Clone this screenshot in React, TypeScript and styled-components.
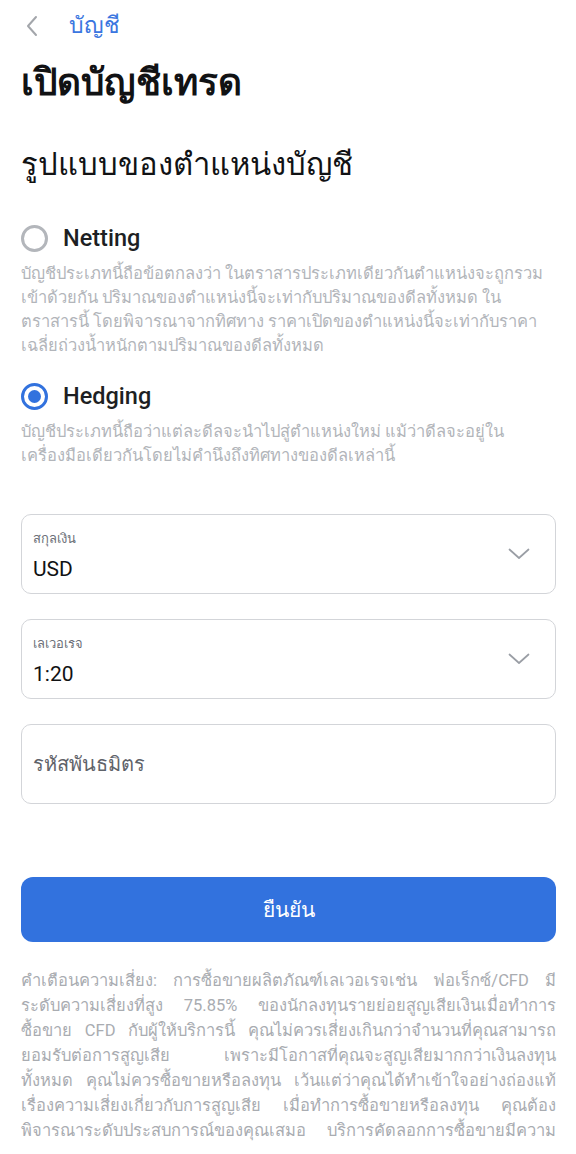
import React, { useState } from "react";
import styled, { createGlobalStyle } from "styled-components";

const GlobalStyle = createGlobalStyle`
  html, body {
    margin: 0;
    padding: 0;
    background: #ffffff;
  }
  body {
    font-family: Roboto, "Noto Sans", "Liberation Sans", sans-serif;
    color: #1d1f23;
  }
`;

// lines are split the way the app wraps them
const modes = [
  {
    key: "netting",
    label: "Netting",
    desc: [
      "บัญชีประเภทนี้ถือข้อตกลงว่า ในตราสารประเภทเดียวกันตำแหน่งจะถูกรวม",
      "เข้าด้วยกัน ปริมาณของตำแหน่งนี้จะเท่ากับปริมาณของดีลทั้งหมด ใน",
      "ตราสารนี้ โดยพิจารณาจากทิศทาง ราคาเปิดของตำแหน่งนี้จะเท่ากับราคา",
      "เฉลี่ยถ่วงน้ำหนักตามปริมาณของดีลทั้งหมด",
    ],
  },
  {
    key: "hedging",
    label: "Hedging",
    desc: [
      "บัญชีประเภทนี้ถือว่าแต่ละดีลจะนำไปสู่ตำแหน่งใหม่ แม้ว่าดีลจะอยู่ใน",
      "เครื่องมือเดียวกันโดยไม่คำนึงถึงทิศทางของดีลเหล่านี้",
    ],
  },
];

const warning = [
  "คำเตือนความเสี่ยง: การซื้อขายผลิตภัณฑ์เลเวอเรจเช่น ฟอเร็กซ์/CFD มี",
  "ระดับความเสี่ยงที่สูง 75.85% ของนักลงทุนรายย่อยสูญเสียเงินเมื่อทำการ",
  "ซื้อขาย CFD กับผู้ให้บริการนี้ คุณไม่ควรเสี่ยงเกินกว่าจำนวนที่คุณสามารถ",
  "ยอมรับต่อการสูญเสีย เพราะมีโอกาสที่คุณจะสูญเสียมากกว่าเงินลงทุน",
  "ทั้งหมด คุณไม่ควรซื้อขายหรือลงทุน เว้นแต่ว่าคุณได้ทำเข้าใจอย่างถ่องแท้",
  "เรื่องความเสี่ยงเกี่ยวกับการสูญเสีย เมื่อทำการซื้อขายหรือลงทุน คุณต้อง",
  "พิจารณาระดับประสบการณ์ของคุณเสมอ บริการคัดลอกการซื้อขายมีความ",
];

const Chevron = ({ dir }: { dir: "left" | "down" }) =>
  dir === "left" ? (
    <svg width="14" height="22" viewBox="0 0 14 22" fill="none">
      <path d="M11 2 L3 11 L11 20" stroke="#a3a6ab" strokeWidth="2" strokeLinecap="round" strokeLinejoin="round" />
    </svg>
  ) : (
    <svg width="24" height="14" viewBox="0 0 24 14" fill="none">
      <path d="M2.5 2.5 L12 11 L21.5 2.5" stroke="#9a9ea5" strokeWidth="1.7" strokeLinecap="round" strokeLinejoin="round" />
    </svg>
  );

const App = () => {
  const [mode, setMode] = useState("hedging");

  return (
    <Page>
      <GlobalStyle />
      <TopBar>
        <BackBtn>
          <Chevron dir="left" />
        </BackBtn>
        <TopTitle>บัญชี</TopTitle>
      </TopBar>

      <PageTitle>เปิดบัญชีเทรด</PageTitle>
      <SectionTitle>รูปแบบของตำแหน่งบัญชี</SectionTitle>

      <ModeList>
        {modes.map((m) => (
          <ModeItem key={m.key} onClick={() => setMode(m.key)}>
            <ModeHead>
              <Radio checked={mode === m.key} />
              <ModeLabel>{m.label}</ModeLabel>
            </ModeHead>
            <ModeDesc>
              {m.desc.map((line, i) => (
                <DescLine key={i}>{line}</DescLine>
              ))}
            </ModeDesc>
          </ModeItem>
        ))}
      </ModeList>

      <Fields>
        <Field>
          <FieldText>
            <FieldLabel>สกุลเงิน</FieldLabel>
            <FieldValue>USD</FieldValue>
          </FieldText>
          <Chevron dir="down" />
        </Field>
        <Field>
          <FieldText>
            <FieldLabel>เลเวอเรจ</FieldLabel>
            <FieldValue>1:20</FieldValue>
          </FieldText>
          <Chevron dir="down" />
        </Field>
        <Field>
          <Placeholder>รหัสพันธมิตร</Placeholder>
        </Field>
      </Fields>

      <SubmitButton>ยืนยัน</SubmitButton>

      <Warning>
        {warning.map((line, i) => (
          <WarnLine key={i}>{line}</WarnLine>
        ))}
      </Warning>
    </Page>
  );
};

export default App;

const Page = styled.div`
  width: 576px;
  height: 1154px;
  overflow: hidden;
  box-sizing: border-box;
  padding: 0 20px 0 21px;
  display: flex;
  flex-direction: column;
  & > * {
    flex-shrink: 0;
  }
`;

const TopBar = styled.div`
  height: 50px;
  display: flex;
  align-items: center;
  gap: 26px;
`;

const BackBtn = styled.div`
  width: 22px;
  display: flex;
  justify-content: center;
  padding-top: 2px;
`;

const TopTitle = styled.div`
  color: #3b76e0;
  font-size: 23px;
`;

const PageTitle = styled.h1`
  margin: 8px 0 0;
  font-size: 37px;
  font-weight: 700;
  line-height: 50px;
  color: #111214;
`;

const SectionTitle = styled.h2`
  margin: 35px 0 0;
  font-size: 31px;
  font-weight: 400;
  line-height: 44px;
  color: #111214;
`;

const ModeList = styled.div`
  margin-top: 35px;
  display: flex;
  flex-direction: column;
  gap: 22px;
`;

const ModeItem = styled.div`
  display: flex;
  flex-direction: column;
  cursor: pointer;
`;

const ModeHead = styled.div`
  display: flex;
  align-items: center;
  gap: 15px;
  height: 32px;
`;

const Radio = styled.span<{ checked: boolean }>`
  width: 27px;
  height: 27px;
  box-sizing: border-box;
  border-radius: 50%;
  border: 3px solid ${(p) => (p.checked ? "#3272de" : "#b3b6bb")};
  display: flex;
  align-items: center;
  justify-content: center;
  &::after {
    content: "";
    width: 13px;
    height: 13px;
    border-radius: 50%;
    background: ${(p) => (p.checked ? "#3272de" : "transparent")};
  }
`;

const ModeLabel = styled.span`
  font-size: 23.5px;
  font-weight: 500;
  color: #1d1f23;
`;

const ModeDesc = styled.div`
  margin-top: 8px;
  display: flex;
  flex-direction: column;
`;

const DescLine = styled.span`
  font-size: 16.5px;
  line-height: 24px;
  color: #b2b5ba;
  white-space: nowrap;
`;

const Fields = styled.div`
  margin-top: 46px;
  display: flex;
  flex-direction: column;
  gap: 25px;
`;

const Field = styled.div`
  height: 80px;
  box-sizing: border-box;
  border: 1.5px solid #d3d5d9;
  border-radius: 10px;
  padding: 0 24px 0 11px;
  display: flex;
  align-items: center;
  justify-content: space-between;
`;

const FieldText = styled.div`
  display: flex;
  flex-direction: column;
  gap: 8px;
`;

const FieldLabel = styled.span`
  font-size: 13px;
  color: #6c7078;
`;

const FieldValue = styled.span`
  font-size: 21px;
  color: #111214;
`;

const Placeholder = styled.span`
  font-size: 20px;
  color: #5f636a;
`;

const SubmitButton = styled.button`
  margin-top: 73px;
  height: 65px;
  width: 100%;
  border: none;
  border-radius: 12px;
  background: #3272de;
  color: #ffffff;
  font-size: 21px;
  font-family: inherit;
  cursor: pointer;
`;

const Warning = styled.div`
  margin-top: 26px;
  display: flex;
  flex-direction: column;
`;

const WarnLine = styled.span`
  font-size: 16.5px;
  line-height: 25px;
  color: #a9acb1;
  text-align: justify;
  text-align-last: justify;
`;
